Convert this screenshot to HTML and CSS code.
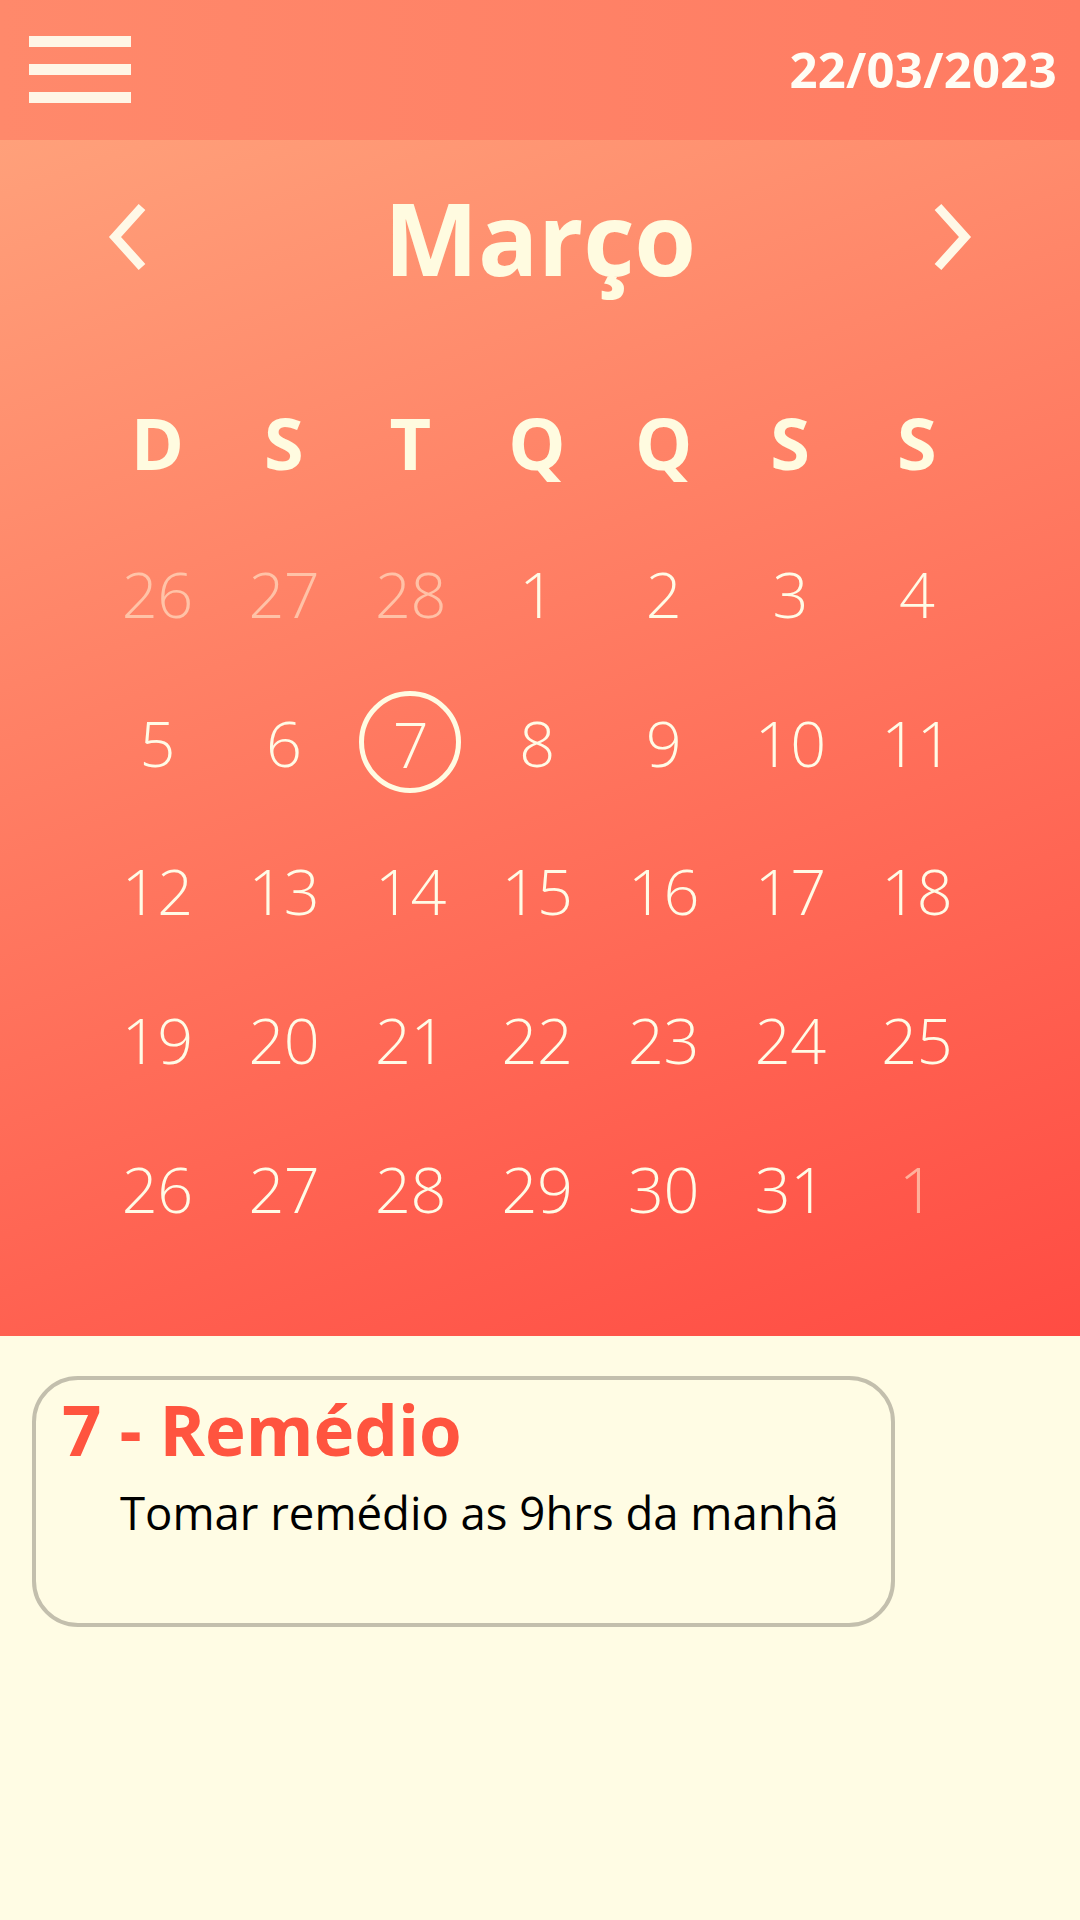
FILE: index.html
```html
<!DOCTYPE html>
<html lang="pt-BR">
<head>
<meta charset="utf-8">
<title>Calendário</title>
<link rel="stylesheet" href="styles.css">
</head>
<body>
<header class="topbar">
  <div class="menu">
    <span class="bar"></span>
    <span class="bar"></span>
    <span class="bar"></span>
  </div>
  <div class="today">22/03/2023</div>
</header>

<section class="calendar">
  <div class="month-row">
    <svg class="arrow" viewBox="0 0 40 68" width="40" height="68"><polyline points="34,4 7,34 34,64" /></svg>
    <h1 class="month">Março</h1>
    <svg class="arrow" viewBox="0 0 40 68" width="40" height="68"><polyline points="6,4 33,34 6,64" /></svg>
  </div>

  <div class="weekdays">
    <span>D</span><span>S</span><span>T</span><span>Q</span><span>Q</span><span>S</span><span>S</span>
  </div>

  <div class="days">
    <span class="day muted">26</span><span class="day muted">27</span><span class="day muted">28</span><span class="day">1</span><span class="day">2</span><span class="day">3</span><span class="day">4</span>
    <span class="day">5</span><span class="day">6</span><span class="day"><span class="selected">7</span></span><span class="day">8</span><span class="day">9</span><span class="day">10</span><span class="day">11</span>
    <span class="day">12</span><span class="day">13</span><span class="day">14</span><span class="day">15</span><span class="day">16</span><span class="day">17</span><span class="day">18</span>
    <span class="day">19</span><span class="day">20</span><span class="day">21</span><span class="day">22</span><span class="day">23</span><span class="day">24</span><span class="day">25</span>
    <span class="day">26</span><span class="day">27</span><span class="day">28</span><span class="day">29</span><span class="day">30</span><span class="day">31</span><span class="day muted">1</span>
  </div>
</section>

<main class="events">
  <article class="card">
    <h2 class="card-title">7 - Remédio</h2>
    <p class="card-text">Tomar remédio as 9hrs da manhã</p>
  </article>
</main>
</body>
</html>
```

FILE: styles.css
```css
* { box-sizing: border-box; }

html, body {
  margin: 0;
  padding: 0;
}

body {
  width: 1080px;
  min-height: 1920px;
  background: #fffce4;
  font-family: "Open Sans", "DejaVu Sans", sans-serif;
}

.topbar {
  height: 140px;
  display: flex;
  align-items: center;
  justify-content: space-between;
  padding: 0 23px 0 29px;
  background: linear-gradient(to right, #ff896b, #ff7b62);
}

.menu {
  display: flex;
  flex-direction: column;
  gap: 17px;
  margin-top: -1px;
}

.bar {
  display: block;
  width: 102px;
  height: 11px;
  background: #fff6e6;
}

.today {
  font-size: 49px;
  font-weight: 700;
  color: #fffdf5;
  line-height: 1;
  letter-spacing: 0.3px;
  margin-top: -2px;
}

.calendar {
  height: 1196px;
  padding-top: 37px;
  background: linear-gradient(160deg, #ffa07a 0%, #ff4c43 100%);
}

.month-row {
  height: 120px;
  display: flex;
  align-items: center;
  justify-content: space-between;
  padding: 0 108px;
}

.arrow {
  display: block;
  width: 40px;
  height: 68px;
}

.arrow polyline {
  fill: none;
  stroke: #fff8e7;
  stroke-width: 9;
  stroke-linejoin: miter;
}

.month {
  margin: 0;
  font-size: 100px;
  font-weight: 700;
  line-height: 120px;
  color: #fffbe0;
  letter-spacing: -0.3px;
}

.weekdays {
  margin-top: 95px;
  height: 100px;
  display: grid;
  grid-template-columns: repeat(7, 1fr);
  padding: 0 100px 0 94px;
  font-size: 72px;
  font-weight: 700;
  line-height: 100px;
  color: #fffbe0;
  text-align: center;
}

.days {
  margin-top: 27px;
  display: grid;
  grid-template-columns: repeat(7, 1fr);
  grid-auto-rows: 148.75px;
  padding: 0 100px 0 94px;
}

.day {
  display: flex;
  align-items: center;
  justify-content: center;
  font-size: 63px;
  font-weight: 300;
  color: #fffbe6;
  line-height: 1;
  letter-spacing: -0.5px;
}

.day.muted {
  color: rgba(255, 236, 210, 0.6);
}

.selected {
  display: inline-flex;
  align-items: center;
  justify-content: center;
  width: 102px;
  height: 102px;
  border: 5px solid #fffbe2;
  border-radius: 50%;
  padding-top: 3px;
}

.events {
  padding: 40px 0 0 32px;
}

.card {
  width: 863px;
  height: 251px;
  border: 4px solid #c3bfad;
  border-radius: 46px;
  padding: 8px 20px 0 26px;
}

.card-title {
  margin: 0;
  font-size: 69px;
  font-weight: 700;
  line-height: 1.2;
  color: #ff543f;
  letter-spacing: 0;
}

.card-text {
  margin: 12px 0 0 58px;
  font-size: 45.5px;
  font-weight: 400;
  line-height: 1.3;
  color: #000;
  letter-spacing: 0;
}
```
